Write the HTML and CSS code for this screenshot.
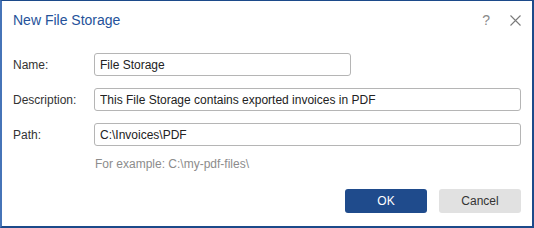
FILE: index.html
```html
<!DOCTYPE html>
<html>
<head>
<meta charset="utf-8">
<link rel="stylesheet" href="styles.css">
</head>
<body>
<div class="dialog">
  <div class="header">
    <div class="title">New File Storage</div>
    <div class="tools">
      <span class="help">?</span>
      <svg class="close" width="11" height="11" viewBox="0 0 11 11"><path d="M0.5 0.5 L10.5 10.5 M10.5 0.5 L0.5 10.5" stroke="#7a7a7a" stroke-width="1.1" fill="none"/></svg>
    </div>
  </div>
  <div class="form">
    <label class="label">Name:</label>
    <div class="field"><input class="input short" type="text" value="File Storage"></div>
    <label class="label">Description:</label>
    <div class="field"><input class="input" type="text" value="This File Storage contains exported invoices in PDF"></div>
    <label class="label">Path:</label>
    <div class="field"><input class="input" type="text" value="C:\Invoices\PDF"></div>
    <div></div>
    <div class="hint">For example: C:\my-pdf-files\</div>
  </div>
  <div class="buttons">
    <button class="btn primary">OK</button>
    <button class="btn secondary">Cancel</button>
  </div>
</div>
</body>
</html>
```
FILE: styles.css
```css
* { box-sizing: border-box; }
html, body { margin: 0; padding: 0; background: #fff; }
body { font-family: "Liberation Sans", Arial, sans-serif; }
.dialog {
  width: 534px;
  height: 228px;
  border: 2px solid #1c4a8a;
  border-top-width: 1px;
  border-left-color: #4674b8;
  background: #fff;
  padding: 11px 11px 0 11px;
}
.header {
  display: flex;
  justify-content: space-between;
  align-items: center;
  height: 16px;
}
.title {
  font-size: 14px;
  line-height: 16px;
  color: #25529a;
}
.tools {
  display: flex;
  align-items: center;
  gap: 20px;
  padding-right: 0px;
}
.help {
  font-size: 14px;
  line-height: 16px;
  color: #8a8a8a;
}
.close { display: block; }
.form {
  margin-top: 25px;
  display: grid;
  grid-template-columns: 81px 1fr;
  row-gap: 12px;
  align-items: center;
}
.label {
  font-size: 12px;
  color: #333;
}
.field { display: flex; }
.input {
  width: 427px;
  height: 23px;
  border: 1px solid #b5b5b5;
  border-radius: 3px;
  padding: 0 5px;
  font-family: "Liberation Sans", Arial, sans-serif;
  font-size: 12px;
  color: #222;
  background: #fff;
  outline: none;
}
.input.short { width: 257px; }
.hint {
  margin-top: -1px;
  padding-left: 1px;
  font-size: 12px;
  line-height: 14px;
  color: #8c8c8c;
}
.buttons {
  display: flex;
  justify-content: flex-end;
  gap: 12px;
  margin-top: 18px;
}
.btn {
  width: 82px;
  height: 24px;
  border: none;
  border-radius: 3px;
  font-family: "Liberation Sans", Arial, sans-serif;
  font-size: 12px;
  padding: 0;
}
.primary { background: #1f4b8c; color: #fff; }
.secondary { background: #e1e1e1; color: #333; }
```
